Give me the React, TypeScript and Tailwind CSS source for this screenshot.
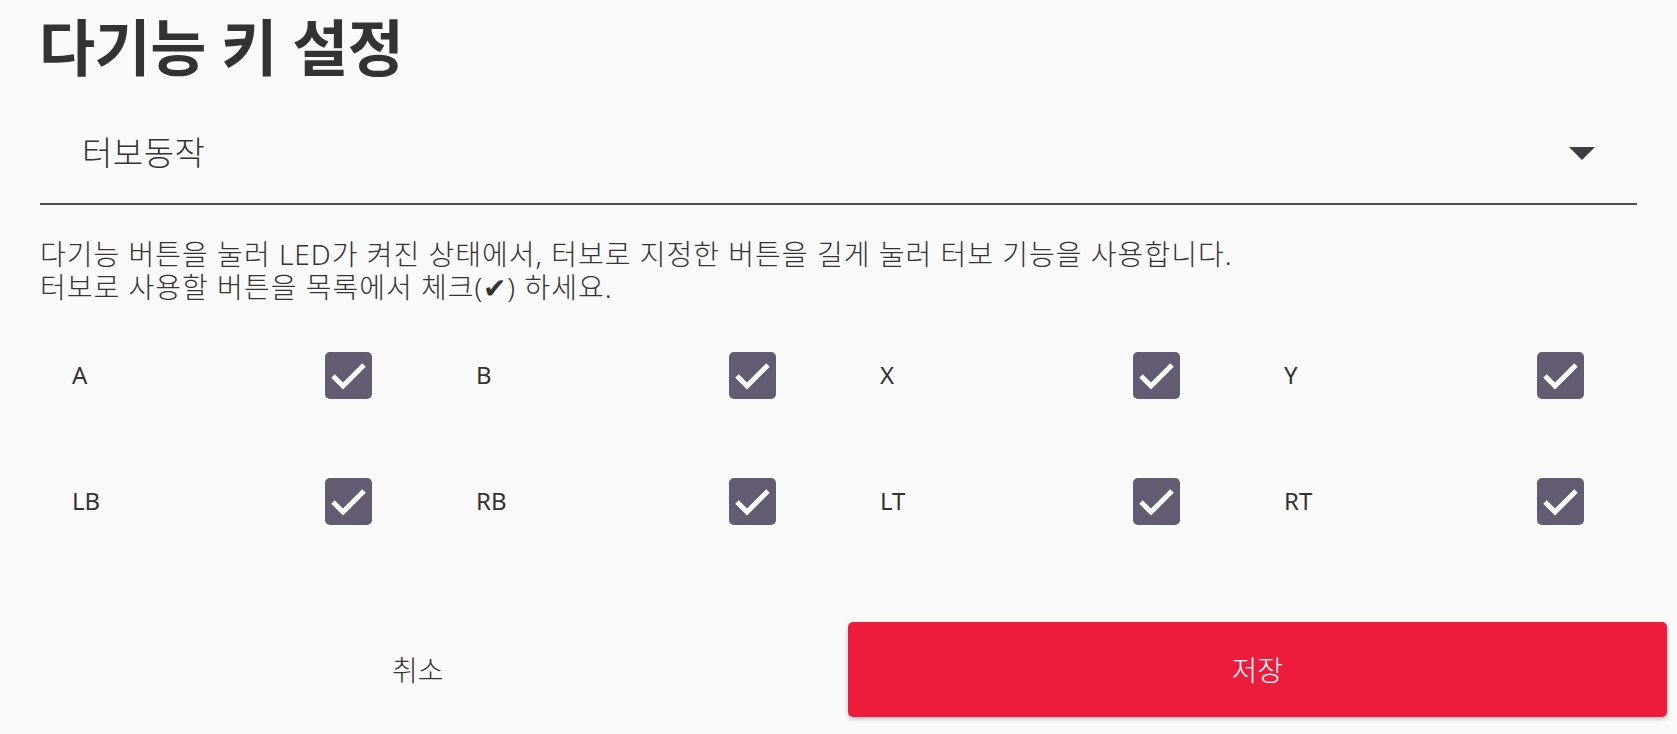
const keys = ['A', 'B', 'X', 'Y', 'LB', 'RB', 'LT', 'RT'];

function CheckBox() {
  return (
    <div className="w-[47px] h-[47px] rounded-[5px] bg-[#625b71] flex items-center justify-center">
      <svg width="47" height="47" viewBox="0 0 47 47">
        <polyline
          points="8,24 18,34 39,13"
          fill="none"
          stroke="#ffffff"
          strokeWidth="5"
        />
      </svg>
    </div>
  );
}

export default function App() {
  return (
    <div
      className="w-[1677px] h-[734px] bg-[#fafafa] overflow-hidden text-[#333333]"
      style={{ fontFamily: '"Noto Sans", "Noto Sans CJK KR", sans-serif' }}
    >
      {/* Title */}
      <div className="h-[95px] pl-[39px] flex items-center">
        <h1 className="text-[61px] font-semibold leading-none tracking-[-0.5px]">다기능 키 설정</h1>
      </div>

      {/* Dropdown */}
      <div className="mx-[40px] h-[110px] border-b-2 border-[#505050] flex items-center justify-between pl-[42px] pr-[42px]">
        <span className="text-[33px] font-light leading-none mt-[6px] tracking-[0.5px]">터보동작</span>
        <svg width="26" height="13" viewBox="0 0 26 13" className="mt-[8px]">
          <polygon points="0,0 26,0 13,13" fill="#3d3d42" />
        </svg>
      </div>

      {/* Description */}
      <p className="pl-[40px] mt-[33px] text-[28px] font-light leading-[33px] tracking-[1px]">
        다기능 버튼을 눌러 LED가 켜진 상태에서, 터보로 지정한 버튼을 길게 눌러 터보 기능을 사용합니다.
        <br />
        터보로 사용할 버튼을 목록에서 체크(✔) 하세요.
      </p>

      {/* Key grid */}
      <div className="ml-[40px] w-[1616px] mt-[8px] grid grid-cols-4">
        {keys.map((k) => (
          <div key={k} className="h-[126px] flex items-center">
            <span className="flex-1 pl-[32px] text-[24px]">{k}</span>
            <div className="mr-[72px]">
              <CheckBox />
            </div>
          </div>
        ))}
      </div>

      {/* Actions */}
      <div className="mt-[58px] pl-[8px] pr-[10px] flex gap-[20px] h-[95px]">
        <button className="flex-1 flex items-center justify-center text-[28px] font-light text-[#333333]">취소</button>
        <button className="flex-1 flex items-center justify-center text-[28px] font-light text-white bg-[#ee1c3c] rounded-[5px] shadow-[0_2px_4px_rgba(0,0,0,0.25)]">
          저장
        </button>
      </div>
    </div>
  );
}
